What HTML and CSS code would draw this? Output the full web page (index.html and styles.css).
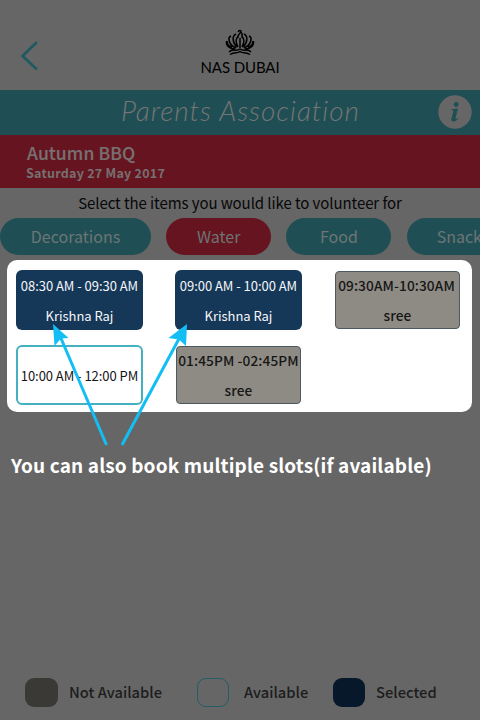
FILE: index.html
```html
<!DOCTYPE html>
<html lang="en">
<head>
<meta charset="utf-8">
<title>Parents Association</title>
<link rel="stylesheet" href="styles.css">
</head>
<body>
<main class="app">
  <header class="header">
    <svg class="back" width="18" height="30" viewBox="0 0 18 30"><path d="M15 2 1.500 15 15 27.500"/></svg>
    <div class="brand">
      <svg class="crest" width="30" height="27" viewBox="0 0 30 27">
        <path d="M13 18C10 13 11 9 13 8M17 18C20 13 19 9 17 8M12 18C7 13 7 7 11 5M18 18C23 13 23 7 19 5M11 19C4 16 2 9 6 7M19 19C26 16 28 9 24 7M10 20C5 20 1 17 1.500 12M20 20C25 20 29 17 28.500 12M2 12C2 15 3 17 7 18M28 12C28 15 27 17 23 18M13 9C12 5 16 5 16 2C15 1 13 2 13.500 3M16 3C18 5 17 7 17 9M15 9V19M4 23C8 19 11 23 15 20C19 23 22 19 26 23M5 25.500C10 22 12 25 15 22.500C18 25 20 22 25 25.500"/>
      </svg>
      <span class="brand-name">NAS DUBAI</span>
    </div>
  </header>
  <div class="titlebar">
    <h1 class="title">Parents Association</h1>
    <svg class="info" width="34" height="34" viewBox="0 0 34 34"><circle class="info-disc" cx="17" cy="17" r="16.700"/><circle class="info-mark" cx="18.200" cy="9.500" r="2.400"/><path class="info-mark" d="M13.500 14.300 20 13.500 17.500 23.200Q17.200 25 20.300 22.700L20.700 23.300Q17.500 26.700 15 26.400Q12.600 26 13.500 23L15.400 16.300Q15.600 15 13.500 15.200Z"/></svg>
  </div>
  <section class="event">
    <h2 class="event-name">Autumn BBQ</h2>
    <p class="event-date">Saturday 27 May 2017</p>
  </section>
  <p class="prompt">Select the items you would like to volunteer for</p>
  <nav class="tabs">
    <span class="tab tab-wide">Decorations</span>
    <span class="tab tab-active">Water</span>
    <span class="tab">Food</span>
    <span class="tab tab-more">Snacks</span>
  </nav>
  <section class="panel">
    <div class="slot selected"><span>08:30 AM - 09:30 AM</span><span>Krishna Raj</span></div>
    <div class="slot selected"><span>09:00 AM - 10:00 AM</span><span>Krishna Raj</span></div>
    <div class="slot taken"><span class="time">09:30AM-10:30AM</span><span>sree</span></div>
    <div class="slot open"><span>10:00 AM - 12:00 PM</span></div>
    <div class="slot taken"><span>01:45PM -02:45PM</span><span>sree</span></div>
  </section>
  <p class="hint">You can also book multiple slots(if available)</p>
  <footer class="legend">
    <span class="swatch swatch-taken"></span><span class="label label-taken">Not Available</span>
    <span class="swatch swatch-open"></span><span class="label label-open">Available</span>
    <span class="swatch swatch-selected"></span><span class="label">Selected</span>
  </footer>
  <svg class="arrows" width="480" height="720" viewBox="0 0 480 720">
    <path class="shaft" d="M106.500 445 60 336M122 445 181 335"/>
    <path class="head" d="M53 324 68.500 338 61 338.500 54.500 346ZM187 324 186 346 179 339.500 168.500 338Z"/>
  </svg>
</main>
</body>
</html>
```
FILE: styles.css
```css
* { box-sizing: border-box; }
body, h1, h2, p { margin: 0; }
body { background: #666; overflow: hidden; }
.app {
  position: relative;
  display: flex;
  flex-direction: column;
  width: 480px;
  height: 720px;
  overflow: hidden;
  background: #666;
  font-family: "Noto Sans CJK SC", "Noto Sans", sans-serif;
  white-space: nowrap;
}
.header {
  display: grid;
  grid-template-columns: 180px 120px 180px;
  height: 90px;
}
.back { margin: 41px 0 0 21px; fill: none; stroke: #1f5a60; stroke-width: 2.8; stroke-linecap: round; }
.brand { display: flex; flex-direction: column; align-items: center; padding-top: 29px; }
.crest { fill: none; stroke: #000; stroke-width: 1.5; }
.brand-name { margin-top: 1px; font: 15px/20px Lato, sans-serif; letter-spacing: -.1px; color: #000; }
.titlebar {
  display: flex;
  align-items: center;
  justify-content: flex-end;
  height: 45px;
  padding-right: 8px;
  background: #1f4f54;
}
.title {
  width: 238px;
  margin-right: 79px;
  padding-bottom: 4px;
  font: italic 300 28px/41px Lato, sans-serif;
  letter-spacing: .95px;
  font-variant-ligatures: none;
  color: #757575;
}
.info { margin-bottom: 2px; }
.info-disc { fill: #666; }
.info-mark { fill: #1f4f54; }
.event { height: 53px; padding: 6px 0 0 27px; background: #66141f; color: #777071; }
.event-name { font-size: 17.5px; font-weight: 500; line-height: 24px; letter-spacing: .1px; -webkit-text-stroke: .2px #777071; }
.event-date { margin-left: -1px; font-size: 12.5px; font-weight: 700; line-height: 15px; letter-spacing: .25px; }
.prompt { height: 30px; font-size: 15px; line-height: 30px; letter-spacing: -.08px; text-align: center; color: #080808; }
.tabs { display: flex; gap: 15.2px; height: 42px; }
.tab {
  flex: none;
  width: 105px;
  height: 37px;
  border-radius: 19px;
  background: #1f4f54;
  color: #6d7576;
  font-size: 16px;
  line-height: 37px;
  text-align: center;
}
.tab-wide { width: 151px; }
.tab-more { width: 113px; }
.tab-active { background: #66141f; }
.panel {
  display: grid;
  grid-template-columns: 127px 127px 127px;
  grid-template-rows: 60px 60px;
  gap: 15px 32px;
  width: 465px;
  height: 152px;
  margin-left: 7px;
  padding: 10px 9px;
  border-radius: 10px;
  background: #fff;
}
.slot {
  display: flex;
  flex-direction: column;
  align-items: center;
  justify-content: center;
  padding-top: 1px;
  border-radius: 6px;
  font-size: 13px;
  line-height: 30px;
  letter-spacing: -.04px;
}
.slot span { height: 30px; }
.selected { background: #163858; color: #f4f6f8; }
.open { border: 2px solid #45b0bf; color: #151515; }
.taken { margin: 1px; padding: 0 0 1px; border: 1px solid #4d5960; border-radius: 4px; background: #8e8b84; color: #171717; font-size: 13.7px; font-weight: 500; letter-spacing: .1px; }
.time { margin-right: 2px; }
.hint { margin: 37.5px 0 0 11px; font-size: 19px; font-weight: 700; line-height: 30px; letter-spacing: .13px; color: #fff; }
.legend { display: flex; align-items: center; height: 30px; margin: auto 0 13px 25px; font-size: 14.7px; font-weight: 500; line-height: 29px; letter-spacing: .03px; color: #1d1d1d; }
.swatch { flex: none; width: 32px; height: 29px; border-radius: 9px; }
.swatch-taken { width: 33px; background: #3a3936; }
.swatch-open { border: 1px solid #245d64; }
.swatch-selected { background: #06182a; }
.label { height: 31px; margin-left: 11px; }
.label-taken { width: 128px; }
.label-open { width: 89px; margin-left: 15px; }
.arrows { position: absolute; left: 0; top: 0; }
.shaft { fill: none; stroke: #13bef5; stroke-width: 3; }
.head { fill: #13bef5; }
```
